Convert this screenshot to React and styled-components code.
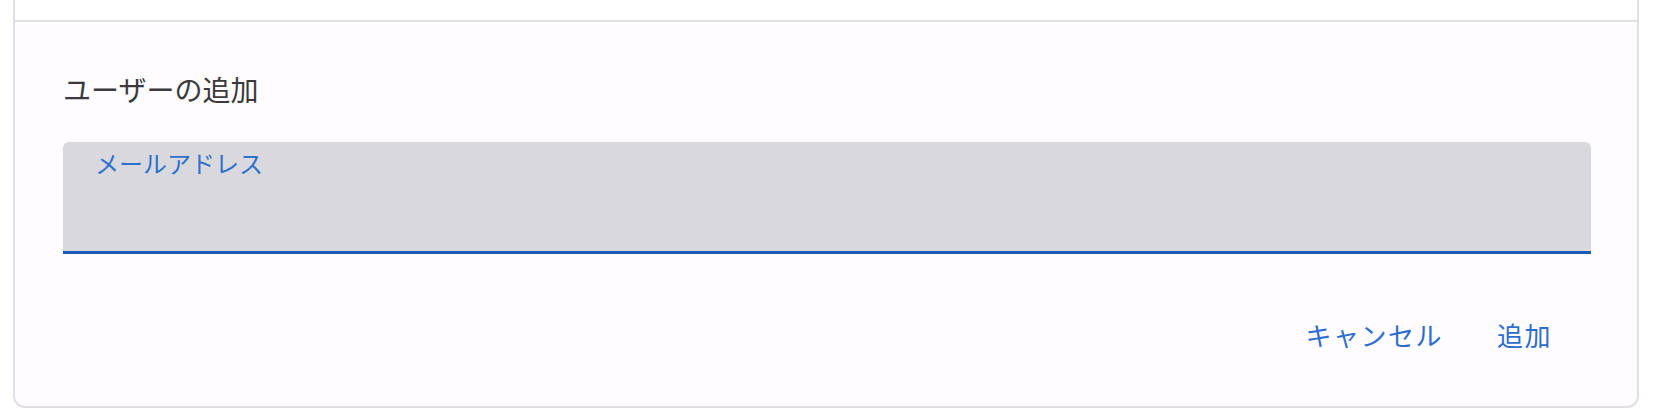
import React from 'react'
import styled, { createGlobalStyle } from 'styled-components'

const GlobalStyle = createGlobalStyle`
    html, body {
        margin: 0;
        padding: 0;
        background: #ffffff;
    }
    body {
        font-family: "Noto Sans CJK JP", "Noto Sans", sans-serif;
    }
`

const Card = styled.div`
    box-sizing: border-box;
    margin-left: 13px;
    width: 1626px;
    border: 2px solid #e0dfe3;
    border-top: none;
    border-radius: 0 0 12px 12px;
    background: #fefcff;
`

const PrevRow = styled.div`
    height: 20px;
    background: #ffffff;
    border-bottom: 2px solid #e0dfe3;
`

const Body = styled.section`
    padding: 49px 46px 47px 48px;
`

const Title = styled.h2`
    margin: 0;
    font-size: 28px;
    line-height: 36px;
    font-weight: 400;
    color: #3a3a3c;
`

const Field = styled.label`
    display: block;
    box-sizing: border-box;
    margin-top: 35px;
    height: 112px;
    padding: 6px 32px 0;
    background: #d9d9dd;
    border-radius: 6px 6px 0 0;
    border-bottom: 3px solid #1c5cb9;

    span {
        display: block;
        font-size: 24px;
        line-height: 30px;
        color: #2d70d0;
    }
`

const Actions = styled.div`
    display: flex;
    justify-content: flex-end;
    gap: 22px;
    margin-top: 57px;
    padding-right: 23px;
`

const TextButton = styled.button`
    border: none;
    background: none;
    padding: 6px 16px;
    font-family: inherit;
    font-size: 26px;
    line-height: 36px;
    letter-spacing: 1.5px;
    color: #2d6dcd;
    cursor: pointer;
`

export default function App() {
    return (
        <>
            <GlobalStyle />
            <Card>
                <PrevRow />
                <Body>
                    <Title>ユーザーの追加</Title>
                    <Field>
                        <span>メールアドレス</span>
                    </Field>
                    <Actions>
                        <TextButton>キャンセル</TextButton>
                        <TextButton>追加</TextButton>
                    </Actions>
                </Body>
            </Card>
        </>
    )
}
